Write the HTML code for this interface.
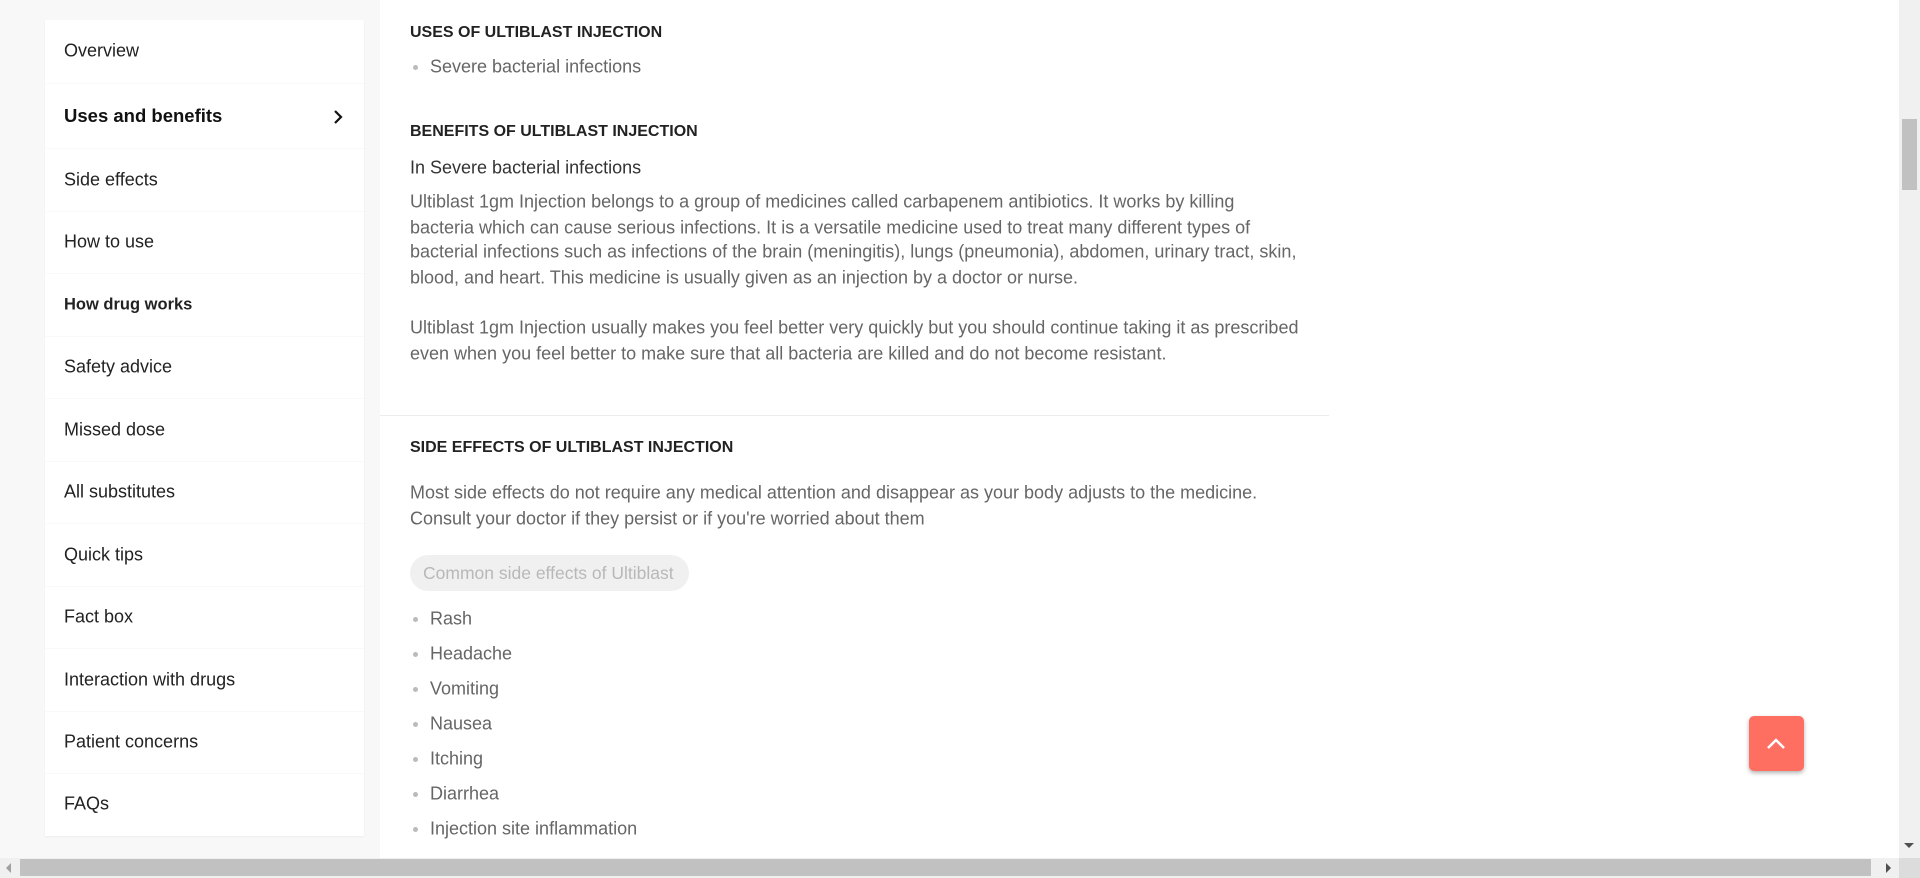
<!DOCTYPE html>
<html><head><meta charset="utf-8"><style>
*{margin:0;padding:0;box-sizing:border-box}
body{width:1920px;height:878px;overflow:hidden;background:#fff;font-family:"Liberation Sans",sans-serif;position:relative}
.left{position:absolute;left:0;top:0;width:380px;height:858px;background:#f8f8f8}
.side{position:absolute;left:45px;top:20px;width:319px;height:816px;background:#fff;box-shadow:0 1px 2px rgba(0,0,0,.05)}
.it{position:absolute;left:19px;font-size:18px;color:#222;transform:translateY(-50%);white-space:nowrap}
.sep{position:absolute;left:0;width:319px;height:1px;background:#f9f9f9}
.t{position:absolute;left:410px;white-space:nowrap;transform:translateY(-50%);font-size:18px;color:#666}
.h{font-weight:bold;color:#222;font-size:16px}
.b::before{content:"";position:absolute;left:3px;top:50%;width:5px;height:5px;border-radius:50%;background:#bbb;transform:translateY(-50%)}
.b{padding-left:20px}
</style></head><body>
<div class="left"></div>
<div class="side">
<div class="it" style="top:31px">Overview</div>
<div class="sep" style="top:63px"></div>
<div class="it" style="top:96px;font-size:18.5px;font-weight:bold;color:#111">Uses and benefits</div>
<svg style="position:absolute;left:287px;top:89px" width="12" height="16" viewBox="0 0 12 16"><path d="M3 2l6 6-6 6" stroke="#111" stroke-width="2.2" fill="none"/></svg>
<div class="sep" style="top:128px"></div>
<div class="it" style="top:160px">Side effects</div>
<div class="sep" style="top:191px"></div>
<div class="it" style="top:222px">How to use</div>
<div class="sep" style="top:253px"></div>
<div class="it" style="top:285px;font-weight:bold;font-size:16.5px">How drug works</div>
<div class="sep" style="top:316px"></div>
<div class="it" style="top:347px">Safety advice</div>
<div class="sep" style="top:378px"></div>
<div class="it" style="top:410px">Missed dose</div>
<div class="sep" style="top:441px"></div>
<div class="it" style="top:472px">All substitutes</div>
<div class="sep" style="top:503px"></div>
<div class="it" style="top:535px">Quick tips</div>
<div class="sep" style="top:566px"></div>
<div class="it" style="top:597px">Fact box</div>
<div class="sep" style="top:628px"></div>
<div class="it" style="top:660px">Interaction with drugs</div>
<div class="sep" style="top:691px"></div>
<div class="it" style="top:722px">Patient concerns</div>
<div class="sep" style="top:753px"></div>
<div class="it" style="top:784px">FAQs</div>
</div>

<div class="t h" style="top:33px">USES OF ULTIBLAST INJECTION</div>
<div class="t b" style="top:67px">Severe bacterial infections</div>
<div class="t h" style="top:132px">BENEFITS OF ULTIBLAST INJECTION</div>
<div class="t" style="top:168px;color:#333">In Severe bacterial infections</div>
<div class="t" style="top:202px">Ultiblast 1gm Injection belongs to a group of medicines called carbapenem antibiotics. It works by killing</div>
<div class="t" style="top:228px">bacteria which can cause serious infections. It is a versatile medicine used to treat many different types of</div>
<div class="t" style="top:252px">bacterial infections such as infections of the brain (meningitis), lungs (pneumonia), abdomen, urinary tract, skin,</div>
<div class="t" style="top:278px">blood, and heart. This medicine is usually given as an injection by a doctor or nurse.</div>
<div class="t" style="top:328px">Ultiblast 1gm Injection usually makes you feel better very quickly but you should continue taking it as prescribed</div>
<div class="t" style="top:354px">even when you feel better to make sure that all bacteria are killed and do not become resistant.</div>
<div style="position:absolute;left:380px;top:415px;width:949px;height:1px;background:#ececec"></div>
<div class="t h" style="top:448px">SIDE EFFECTS OF ULTIBLAST INJECTION</div>
<div class="t" style="top:493px">Most side effects do not require any medical attention and disappear as your body adjusts to the medicine.</div>
<div class="t" style="top:519px">Consult your doctor if they persist or if you're worried about them</div>
<div style="position:absolute;left:410px;top:555px;width:279px;height:36px;border-radius:18px;background:#f0f0f0;color:#b8b8b8;font-size:17.5px;line-height:36px;padding-left:13px;white-space:nowrap">Common side effects of Ultiblast</div>
<div class="t b" style="top:619px">Rash</div>
<div class="t b" style="top:654px">Headache</div>
<div class="t b" style="top:689px">Vomiting</div>
<div class="t b" style="top:724px">Nausea</div>
<div class="t b" style="top:759px">Itching</div>
<div class="t b" style="top:794px">Diarrhea</div>
<div class="t b" style="top:829px">Injection site inflammation</div>

<div style="position:absolute;left:1749px;top:716px;width:55px;height:55px;border-radius:5px;background:#ff6f61;box-shadow:0 2px 4px rgba(0,0,0,.3)"></div>
<svg style="position:absolute;left:1766px;top:737px" width="20" height="14" viewBox="0 0 20 14"><path d="M2 11l8-8 8 8" stroke="#fff" stroke-width="2.5" fill="none"/></svg>

<div style="position:absolute;left:1899px;top:0;width:21px;height:858px;background:#f0f0f0"></div>
<div style="position:absolute;left:1902px;top:119px;width:15px;height:71px;background:#c1c1c1"></div>
<div style="position:absolute;left:1904px;top:843px;width:0;height:0;border-left:5px solid transparent;border-right:5px solid transparent;border-top:5px solid #505050"></div>
<div style="position:absolute;left:0;top:858px;width:1899px;height:20px;background:#f0f0f0"></div>
<div style="position:absolute;left:20px;top:859px;width:1851px;height:17px;background:#c1c1c1"></div>
<div style="position:absolute;left:6px;top:863px;width:0;height:0;border-top:5px solid transparent;border-bottom:5px solid transparent;border-right:5px solid #a0a0a0"></div>
<div style="position:absolute;left:1886px;top:863px;width:0;height:0;border-top:5px solid transparent;border-bottom:5px solid transparent;border-left:5px solid #505050"></div>
<div style="position:absolute;left:1899px;top:858px;width:21px;height:20px;background:#dcdcdc"></div>
</body></html>
